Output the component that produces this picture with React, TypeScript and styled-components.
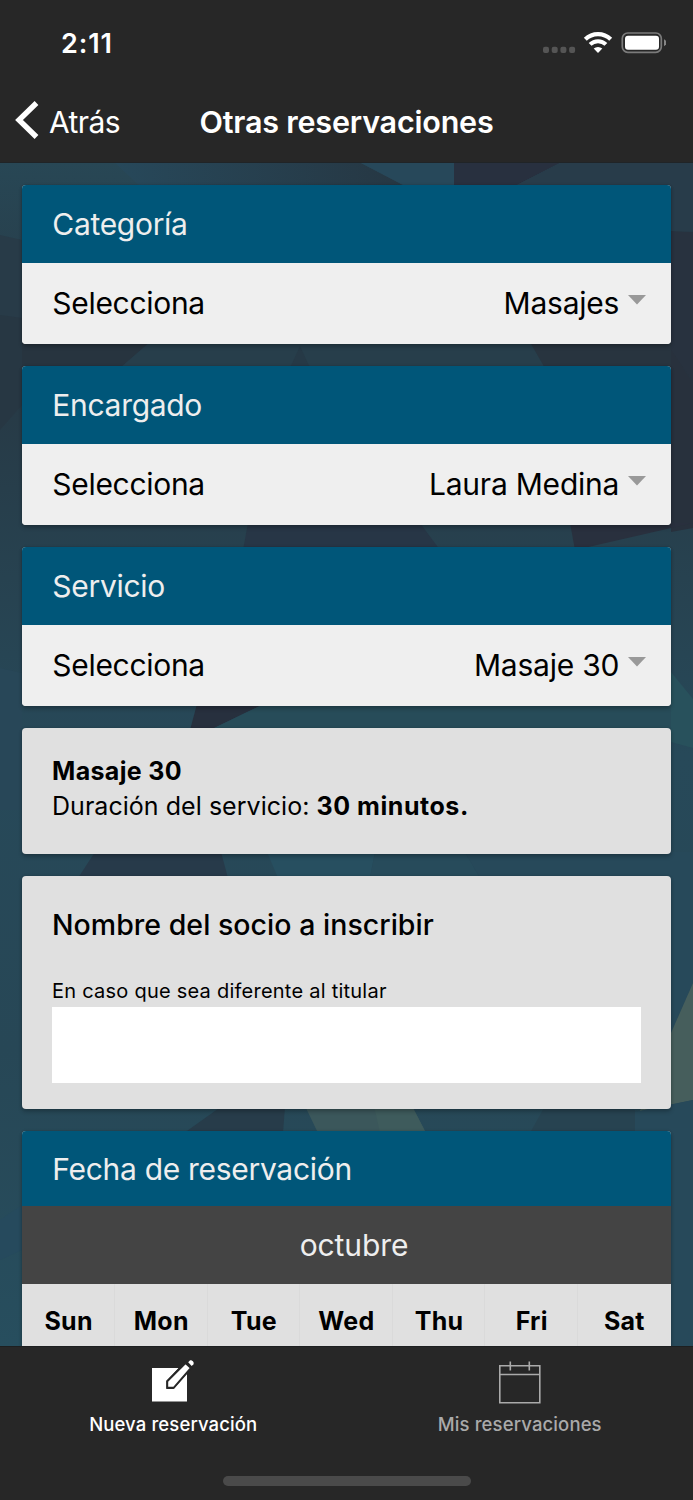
import React from 'react';
import styled, { createGlobalStyle } from 'styled-components';

const GlobalStyle = createGlobalStyle`
  * { box-sizing: border-box; }
  body {
    margin: 0;
    background: #272727;
    font-family: Inter, "Liberation Sans", sans-serif;
    color: #000;
  }
`;

const Screen = styled.div`
  width: 693px;
  height: 1500px;
  display: flex;
  flex-direction: column;
  overflow: hidden;
  background: #272727;
`;

const StatusBar = styled.div`
  height: 81px;
  display: flex;
  justify-content: space-between;
  padding: 0 27px 0 61px;
  color: #fff;
  flex: none;
`;

const Clock = styled.span`
  font-size: 27px;
  font-weight: 600;
  line-height: 33px;
  margin-top: 27px;
  letter-spacing: 0.9px;
`;

const StatusIcons = styled.svg`
  width: 128px;
  height: 30px;
  margin-top: 28px;
`;

const NavBar = styled.header`
  height: 82px;
  flex: none;
  display: grid;
  grid-template-columns: 1fr auto 1fr;
  align-items: center;
  color: #fff;
  border-bottom: 1px solid #202427;
`;

const BackButton = styled.a`
  display: flex;
  align-items: center;
  gap: 10px;
  padding-left: 15px;
  font-size: 30px;
  font-weight: 400;
  line-height: 40px;
  letter-spacing: -0.6px;
`;

const BackIcon = styled.svg`
  width: 24px;
  height: 40px;
  margin-top: -3px;
`;

const Title = styled.h1`
  margin: 0;
  font-size: 30.5px;
  font-weight: 600;
  line-height: 40px;
  letter-spacing: -0.2px;
`;

const Content = styled.main`
  position: relative;
  height: 1183px;
  flex: none;
  overflow: hidden;
`;

const Backdrop = styled.svg`
  position: absolute;
  inset: 0;
  width: 693px;
  height: 1183px;
`;

const CardList = styled.div`
  position: relative;
  display: flex;
  flex-direction: column;
  gap: 22.2px;
  padding: 22.3px 22.3px 0;
`;

const Card = styled.section<{ $height: number; $padded?: boolean }>`
  height: ${p => p.$height}px;
  padding: ${p => (p.$padded ? '0 29.7px' : '0')};
  background: #e0e0e0;
  border-radius: 4px;
  overflow: hidden;
  flex: none;
  box-shadow: 0 3px 4px rgba(0, 0, 0, 0.2), 0 0 3px rgba(0, 0, 0, 0.18);
`;

const CardHeader = styled.h2<{ $height?: number }>`
  height: ${p => p.$height ?? 77.5}px;
  margin: 0;
  padding: 0 30px;
  background: #005679;
  color: #eee;
  font-size: 30px;
  font-weight: 400;
  line-height: ${p => (p.$height ? 76 : 78)}px;
  letter-spacing: -0.3px;
`;

const SelectRow = styled.div`
  height: 81.3px;
  display: flex;
  align-items: center;
  padding: 0 24.5px 0 30px;
  background: #efefef;
  font-size: 30px;
  line-height: 40px;
`;

const SelectLabel = styled.span`
  flex: 1;
  letter-spacing: -0.3px;
`;

const SelectValue = styled.span`
  letter-spacing: -0.22px;
`;

const Caret = styled.svg`
  width: 18px;
  height: 10px;
  margin: -6px 0 0 9px;
  fill: #999;
`;

const ServiceText = styled.p`
  margin: 0;
  padding-top: 26px;
  font-size: 25px;
  line-height: 35px;
  letter-spacing: 0.04px;
`;

const Strong = styled.b<{ $spacing?: number }>`
  font-weight: 700;
  letter-spacing: ${p => p.$spacing ?? 0.35}px;
`;

const FieldTitle = styled.h3`
  margin: 0;
  padding-top: 29px;
  font-size: 28.5px;
  font-weight: 500;
  line-height: 40px;
  letter-spacing: 0.03px;
`;

const FieldHint = styled.label`
  display: block;
  margin-top: 31px;
  font-size: 20px;
  line-height: 30px;
  letter-spacing: 0.24px;
`;

const NameInput = styled.input`
  display: block;
  width: 589px;
  height: 76px;
  margin-top: 1px;
  padding: 0 12px;
  border: 0;
  outline: 0;
  border-radius: 0;
  background: #fff;
  font: inherit;
`;

const Month = styled.div`
  height: 77.5px;
  padding-left: 15px;
  background: #444;
  color: #eee;
  font-size: 30px;
  font-weight: 400;
  line-height: 79px;
  letter-spacing: -0.1px;
  text-align: center;
`;

const WeekDays = styled.div`
  display: grid;
  grid-template-columns: repeat(7, 1fr);
  height: 63px;
`;

const WeekDay = styled.span`
  padding-left: 1px;
  border-right: 1px solid #dadada;
  font-size: 25px;
  font-weight: 700;
  line-height: 74px;
  letter-spacing: 0.3px;
  text-align: center;
  &:last-child { border-right: 0; padding-left: 0; }
`;

const TabBar = styled.nav`
  flex: none;
  height: 130px;
  display: grid;
  grid-template-columns: 1fr 1fr;
  border-top: 1px solid #1d1f20;
`;

const Tab = styled.a<{ $active?: boolean }>`
  display: flex;
  flex-direction: column;
  align-items: center;
  padding-top: 12px;
  color: ${p => (p.$active ? '#fff' : '#aaa')};
  font-size: 18.5px;
  font-weight: 500;
  line-height: 24px;
  letter-spacing: 0.12px;
  svg { width: 44px; height: 46px; margin-bottom: 7px; }
`;

const HomeIndicator = styled.div`
  flex: none;
  width: 248px;
  height: 10px;
  margin: 0 auto;
  border-radius: 5px;
  background: #4a4a4a;
`;

const selects = [
  { title: 'Categoría', value: 'Masajes' },
  { title: 'Encargado', value: 'Laura Medina' },
  { title: 'Servicio', value: 'Masaje 30' },
];

const days = ['Sun', 'Mon', 'Tue', 'Wed', 'Thu', 'Fri', 'Sat'];

function Facets() {
  return (
    <Backdrop viewBox="0 163 693 1183" aria-hidden="true">
      <defs>
        <linearGradient id="base" x1="0" y1="0" x2="0" y2="1">
          <stop offset="0" stopColor="#284755" />
          <stop offset="0.12" stopColor="#273d4a" />
          <stop offset="0.2" stopColor="#273a46" />
          <stop offset="0.35" stopColor="#274250" />
          <stop offset="0.5" stopColor="#274959" />
          <stop offset="0.75" stopColor="#274756" />
          <stop offset="1" stopColor="#274e5e" />
        </linearGradient>
        <linearGradient id="fade" x1="0" x2="1">
          <stop offset="0" stopColor="#27485a" />
          <stop offset="1" stopColor="#263743" />
        </linearGradient>
      </defs>
      <rect y="163" width="693" height="1183" fill="url(#base)" />
      <polygon points="115,163 361,163 405,186 140,186" fill="url(#fade)" />
      <polygon points="361,163 454,163 454,186 405,186" fill="#27485a" />
      <polygon points="454,163 560,163 515,186 454,186" fill="#28303f" />
      <polygon points="560,163 693,163 693,232 671,231 515,186" fill="#283c4a" />
      <polygon points="0,235 22,240 22,320 0,315" fill="#283b48" />
      <polygon points="0,315 22,318 22,405 0,430" fill="#273743" />
      <polygon points="22,342 150,342 120,368 22,368" fill="#27343f" />
      <polygon points="150,342 530,342 545,368 120,368" fill="#273e4b" />
      <polygon points="290,368 300,346 310,368" fill="#263946" />
      <polygon points="530,342 693,342 693,368 545,368" fill="#28343f" />
      <polygon points="671,231 693,232 693,382 671,350" fill="#28323f" />
      <polygon points="671,350 693,382 693,528 671,532" fill="#28313d" />
      <polygon points="248,523 420,523 440,550 243,550" fill="#273646" />
      <polygon points="570,523 693,523 575,550" fill="#29303e" />
      <polygon points="671,672 693,699 693,748 671,742" fill="#28515c" />
      <polygon points="0,668 22,673 22,810 0,810" fill="#284758" />
      <polygon points="197,704 264,704 210,730 190,730" fill="#27303e" />
      <polygon points="264,704 671,704 671,730 210,730" fill="#274c59" />
      <polygon points="95,852 221,852 228,878 78,878" fill="#273a4a" />
      <polygon points="267,852 375,852 370,878 278,878" fill="#274f60" />
      <polygon points="375,852 465,852 480,878 370,878" fill="#274b5b" />
      <polygon points="465,852 693,852 693,983 671,1033 671,878 480,878" fill="#27495a" />
      <polygon points="222,1106 285,1106 283,1133 184,1133" fill="#273c4a" />
      <polygon points="305,1106 412,1106 426,1133 318,1133" fill="#3b575b" />
      <polygon points="374,1106 412,1106 426,1133 380,1133" fill="#3e5b5c" />
      <polygon points="545,1106 635,1110 635,1133 530,1133" fill="#274351" />
      <polygon points="693,983 671,1033 640,1111 693,1100" fill="#465e5c" />
      <polygon points="693,1100 635,1112 635,1133 671,1133 671,1346 693,1346" fill="#27495a" />
      <polygon points="0,1220 22,1205 22,1250 0,1260" fill="#264a5d" />
    </Backdrop>
  );
}

export default function App() {
  return (
    <Screen>
      <GlobalStyle />
      <StatusBar>
        <Clock>2:11</Clock>
        <StatusIcons viewBox="538 28 128 30">
          {[543, 551.7, 560.4, 569.1].map(x => (
            <rect key={x} x={x} y="46.7" width="6" height="6.2" rx="2" fill="#555" />
          ))}
          <g fill="none" stroke="#fff">
            <path d="M585.3 39.3a18.2 18.2 0 0 1 25.4 0" strokeWidth="4.2" />
            <path d="M590.1 44.4a11.2 11.2 0 0 1 15.8 0" strokeWidth="4" />
          </g>
          <path d="M593.7 48.6a6.3 6.3 0 0 1 8.6 0L598 52.9Z" fill="#fff" />
          <rect x="622.3" y="33" width="39" height="19.3" rx="5.5" fill="none" stroke="#7b7b7b" strokeWidth="1.7" />
          <rect x="625" y="35.8" width="34" height="14" rx="3" fill="#fff" />
          <path d="M664 39.2q2.3 1 2.3 3.5t-2.3 3.5Z" fill="#858585" />
        </StatusIcons>
      </StatusBar>
      <NavBar>
        <BackButton>
          <BackIcon viewBox="0 0 24 40">
            <path d="M21.500 3 4 20l17.500 17" fill="none" stroke="#fff" strokeWidth="5.400" />
          </BackIcon>
          Atrás
        </BackButton>
        <Title>Otras reservaciones</Title>
      </NavBar>
      <Content>
        <Facets />
        <CardList>
          {selects.map(s => (
            <Card key={s.title} $height={158.8}>
              <CardHeader>{s.title}</CardHeader>
              <SelectRow>
                <SelectLabel>Selecciona</SelectLabel>
                <SelectValue>{s.value}</SelectValue>
                <Caret viewBox="0 0 18 10"><path d="M0 0h18L9 9.500Z" /></Caret>
              </SelectRow>
            </Card>
          ))}
          <Card $height={125.8} $padded>
            <ServiceText>
              <Strong>Masaje 30</Strong><br />
              Duración del servicio: <Strong $spacing={0.55}>30 minutos.</Strong>
            </ServiceText>
          </Card>
          <Card $height={232.3} $padded>
            <FieldTitle>Nombre del socio a inscribir</FieldTitle>
            <FieldHint htmlFor="member">En caso que sea diferente al titular</FieldHint>
            <NameInput id="member" />
          </Card>
          <Card $height={300}>
            <CardHeader $height={75.7}>Fecha de reservación</CardHeader>
            <Month>octubre</Month>
            <WeekDays>
              {days.map(d => <WeekDay key={d}>{d}</WeekDay>)}
            </WeekDays>
          </Card>
        </CardList>
      </Content>
      <TabBar>
        <Tab $active>
          <svg viewBox="-1 0 44 46">
            <path d="M0 9h35v33.500H0Z" fill="#fff" />
            <path d="M14.500 30v-8L33 2l7.500 6L21.500 30Z" fill="#272727" />
            <path d="M15.200 28.800v-6.600L33.500 4l5.500 5-17.300 19.800Z" fill="#fff" stroke="#272727" strokeWidth="2" />
            <path d="m36.200 3.300 1.700-1.700c1.500-1.200 4.800 1.700 3.500 3.600l-1.700 1.800Z" fill="#fff" />
          </svg>
          Nueva reservación
        </Tab>
        <Tab>
          <svg viewBox="0 0 44 46" fill="none" stroke="#aaa" strokeWidth="1.600">
            <path d="M1.800 6.700h40v37h-40ZM1.800 15.500h40M12.300 2.500v9M31.300 2.500v9" />
          </svg>
          Mis reservaciones
        </Tab>
      </TabBar>
      <HomeIndicator />
    </Screen>
  );
}
